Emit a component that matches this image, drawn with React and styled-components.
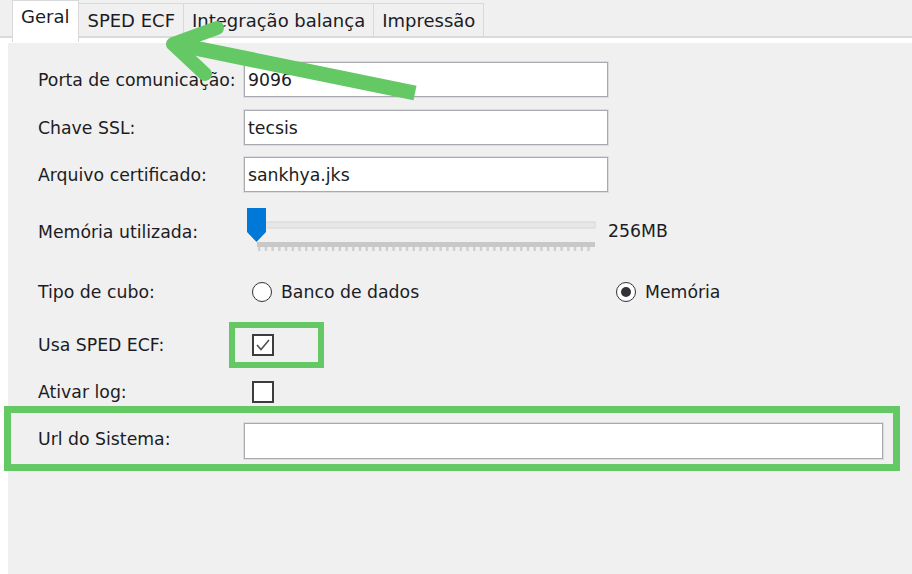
import React from "react";
import styled, { createGlobalStyle } from "styled-components";

const GREEN = "#64c864";

const Global = createGlobalStyle`
  html, body { margin: 0; padding: 0; background: #ffffff; }
  body { font-family: "DejaVu Sans", Verdana, sans-serif; }
  * { box-sizing: border-box; }
`;

const Page = styled.div`
  position: relative;
  width: 912px;
  height: 574px;
  overflow: hidden;
  background: #ffffff;
  display: flex;
  flex-direction: column;
  color: #1c1c24;
  font-size: 17.3px;
`;

const TabStrip = styled.div`
  height: 38px;
  display: flex;
  align-items: flex-end;
  padding-left: 12px;
  background: #f0f0f0;
  border-bottom: 2px solid #dadada;
  font-size: 18px;
`;

const Tab = styled.div`
  height: ${(p) => (p.$active ? "42px" : "33px")};
  margin-bottom: ${(p) => (p.$active ? "-6px" : "0")};
  padding: ${(p) => (p.$active ? "0 9px 10px 8px" : "0 8px")};
  display: flex;
  align-items: center;
  background: ${(p) => (p.$active ? "#ffffff" : "#f0f0f0")};
  border: 1px solid #d9d9d9;
  border-bottom: none;
  border-left: ${(p) => (p.$first ? "1px solid #d9d9d9" : "none")};
  position: relative;
  z-index: ${(p) => (p.$active ? 2 : 1)};
  white-space: nowrap;
  color: #1c1c24;
`;

const Body = styled.div`
  flex: 1;
  padding: 5px 0 0 8px;
  background: #ffffff;
  display: flex;
`;

const Panel = styled.div`
  flex: 1;
  background: #f0f0f0;
  display: flex;
  flex-direction: column;
  padding: 19px 0 0 30px;
`;

const Row = styled.div`
  display: grid;
  grid-template-columns: 206px 1fr;
  align-items: center;
  height: ${(p) => p.$h}px;
  margin-top: ${(p) => p.$mt || 0}px;
`;

const Label = styled.div`
  white-space: nowrap;
  margin-top: ${(p) => p.$dy || 0}px;
`;

const TextBox = styled.div`
  width: ${(p) => p.$w}px;
  height: ${(p) => p.$hh || 35}px;
  background: #ffffff;
  border: 1px solid #a9a9b0;
  box-shadow: 0 0 0 1px #dcdce0;
  display: flex;
  align-items: center;
  padding-left: 3px;
  color: #1c1c24;
`;

const SliderWrap = styled.div`
  display: flex;
  align-items: flex-start;
  height: 48px;
`;

const SliderValue = styled.div`
  margin-left: 12px;
  margin-top: 13px;
`;

const RadioGroup = styled.div`
  display: grid;
  grid-template-columns: 364px auto;
  padding-left: 8px;
`;

const RadioItem = styled.label`
  display: flex;
  align-items: center;
  gap: 9px;
`;

const RadioCircle = styled.span`
  width: 20px;
  height: 20px;
  border-radius: 50%;
  border: 1.5px solid #333338;
  background: #ffffff;
  display: flex;
  align-items: center;
  justify-content: center;
  &::after {
    content: "";
    width: 10px;
    height: 10px;
    border-radius: 50%;
    background: #333338;
    display: ${(p) => (p.$on ? "block" : "none")};
  }
`;

const CheckBox = styled.span`
  margin-left: 8px;
  width: 22px;
  height: 22px;
  border: 2px solid #3c3c40;
  background: #ffffff;
  display: flex;
  align-items: center;
  justify-content: center;
`;

const Highlight = styled.div`
  position: absolute;
  left: ${(p) => p.$x}px;
  top: ${(p) => p.$y}px;
  width: ${(p) => p.$w}px;
  height: ${(p) => p.$h}px;
  border: ${(p) => p.$b}px solid ${GREEN};
  pointer-events: none;
  z-index: 5;
`;

const ArrowLayer = styled.svg`
  position: absolute;
  left: 0;
  top: 0;
  z-index: 6;
  pointer-events: none;
`;

function Slider() {
  const ticks = [];
  for (let x = 14; x <= 350; x += 6.72) ticks.push(x);
  return (
    <svg width="352" height="44" viewBox="0 0 352 44">
      <rect x="21" y="14" width="330" height="6" fill="#e7e7e7" stroke="#d6d6d6" strokeWidth="1" />
      <rect x="13" y="34" width="338" height="5" fill="#c8c8c8" />
      {ticks.map((x, i) => (
        <rect key={i} x={x} y="39" width="2.4" height="4" fill="#cfcfcf" />
      ))}
      <polygon points="3,0 22,0 22,24 12.5,34 3,24" fill="#0078d7" />
    </svg>
  );
}

export default function App() {
  return (
    <>
      <Global />
      <Page>
        <TabStrip>
          <Tab $active $first>Geral</Tab>
          <Tab>SPED ECF</Tab>
          <Tab>Integração balança</Tab>
          <Tab>Impressão</Tab>
        </TabStrip>
        <Body>
          <Panel>
            <Row $h={35}>
              <Label>Porta de comunicação:</Label>
              <TextBox $w={364}>9096</TextBox>
            </Row>
            <Row $h={35} $mt={13}>
              <Label>Chave SSL:</Label>
              <TextBox $w={364}>tecsis</TextBox>
            </Row>
            <Row $h={35} $mt={12}>
              <Label>Arquivo certificado:</Label>
              <TextBox $w={364}>sankhya.jks</TextBox>
            </Row>
            <Row $h={48} $mt={16}>
              <Label>Memória utilizada:</Label>
              <SliderWrap>
                <Slider />
                <SliderValue>256MB</SliderValue>
              </SliderWrap>
            </Row>
            <Row $h={40} $mt={16}>
              <Label>Tipo de cubo:</Label>
              <RadioGroup>
                <RadioItem>
                  <RadioCircle />
                  Banco de dados
                </RadioItem>
                <RadioItem>
                  <RadioCircle $on />
                  Memória
                </RadioItem>
              </RadioGroup>
            </Row>
            <Row $h={40} $mt={13}>
              <Label>Usa SPED ECF:</Label>
              <CheckBox>
                <svg width="16" height="16" viewBox="0 0 16 16">
                  <path d="M2 8 L6 12.5 L14 3" fill="none" stroke="#505054" strokeWidth="1.6" />
                </svg>
              </CheckBox>
            </Row>
            <Row $h={40} $mt={7}>
              <Label>Ativar log:</Label>
              <CheckBox />
            </Row>
            <Row $h={36} $mt={11}>
              <Label $dy={-4}>Url do Sistema:</Label>
              <TextBox $w={639} $hh={36} />
            </Row>
          </Panel>
        </Body>

        <Highlight $x={229} $y={322} $w={95} $h={46} $b={6} />
        <Highlight $x={4} $y={406} $w={896} $h={65} $b={7} />

        <ArrowLayer width="912" height="574" viewBox="0 0 912 574">
          <line x1="415" y1="93" x2="180" y2="45" stroke={GREEN} strokeWidth="15" strokeLinecap="butt" />
          <polyline
            points="217,28 173,44 205,74"
            fill="none"
            stroke={GREEN}
            strokeWidth="14"
            strokeLinecap="round"
            strokeLinejoin="round"
          />
        </ArrowLayer>
      </Page>
    </>
  );
}
